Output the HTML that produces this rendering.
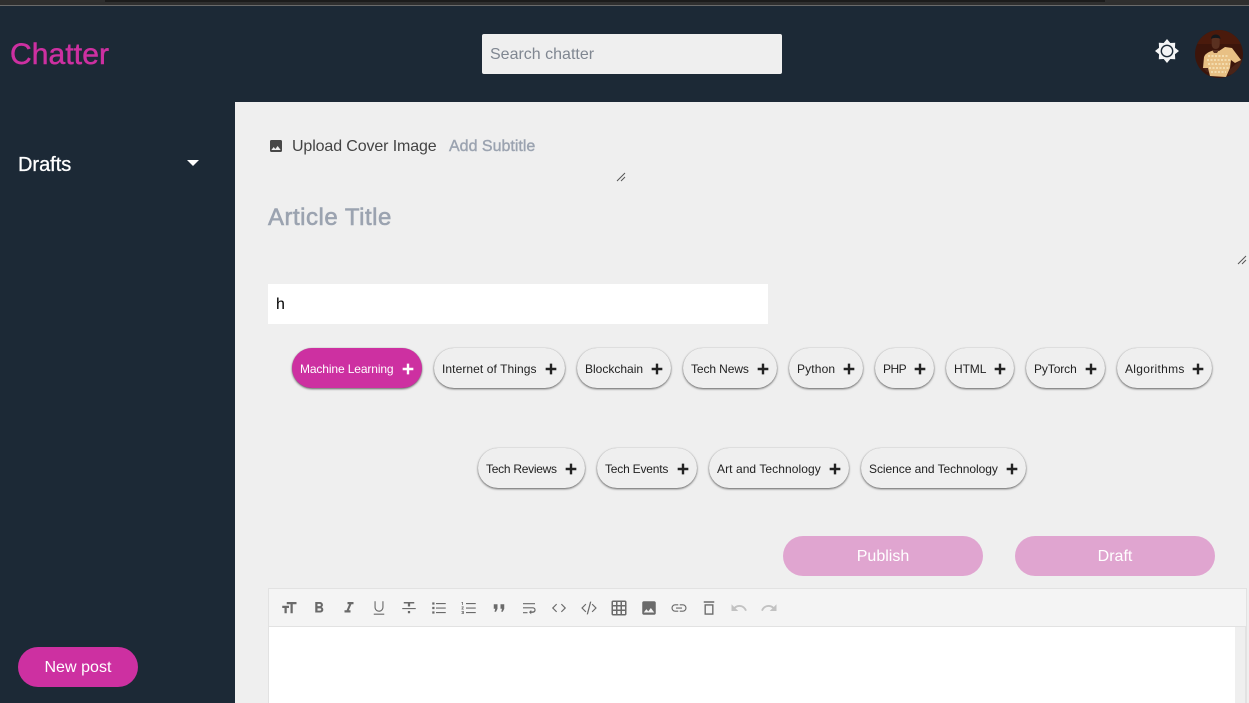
<!DOCTYPE html>
<html lang="en">
<head>
<meta charset="utf-8">
<title>Chatter</title>
<style>
html,body{margin:0;padding:0;width:1249px;height:703px;overflow:hidden;background:#efefef;font-family:"Liberation Sans",sans-serif}
*{box-sizing:border-box}
.a{position:absolute}
.t{position:absolute;white-space:nowrap}
.chip{position:absolute;height:40px;border-radius:20px;background:#efefef;box-shadow:0 1px 2px rgba(0,0,0,.6),0 0 .5px rgba(0,0,0,.3);color:#222;font-size:12px;line-height:43px;padding-left:8px;white-space:nowrap}
.chip svg{position:absolute;right:6px;top:13px;width:16px;height:16px;fill:#222}
.chip.on{background:#cd30a1;color:#fff}
.chip.on svg{fill:#fff}
.tool{position:absolute;top:599px;width:18px;height:18px;fill:#6a6a6a}
.tool.off{fill:#c2c2c2}
.btn{position:absolute;top:536px;width:200px;height:40px;border-radius:20px;background:#e0a5d0;color:#fff;text-align:center;font-size:16px;line-height:42px}
</style>
</head>
<body>
<div class="a" style="left:0;top:0;width:1249px;height:5px;background:#2f2f2f"></div>
<div class="a" style="left:105px;top:0;width:1000px;height:2px;background:#1c1c1c"></div>
<div class="a" style="left:0;top:5px;width:1249px;height:1px;background:#6a6a6a"></div>
<div class="a" style="left:0;top:6px;width:1249px;height:96px;background:#1c2936"></div>
<div class="a" style="left:0;top:102px;width:235px;height:601px;background:#1c2936"></div>

<div class="t" style="left:10px;top:37px;font-size:30px;line-height:36px;color:#cd30a1;letter-spacing:.1px;-webkit-text-stroke:.5px #cd30a1">Chatter</div>
<div class="a" style="left:482px;top:34px;width:300px;height:40px;background:#efefef;border-radius:2px"></div>
<div class="t" style="left:490px;top:35px;font-size:16px;line-height:40px;color:#808791">Search chatter</div>
<svg class="a" style="left:1155px;top:39px" width="24" height="24" viewBox="0 0 24 24" fill="#f4f5f6" fill-rule="evenodd"><path d="M12 0L15.300 4.050 20.200 3.800 19.950 8.700 24 12 19.950 15.300 20.200 20.200 15.300 19.950 12 24 8.700 19.950 3.800 20.200 4.050 15.300 0 12 4.050 8.700 3.800 3.800 8.700 4.050zM12 5.600a6.400 6.400 0 1 0 0 12.800a6.400 6.400 0 1 0 0-12.800zM12 7a5 5 0 1 1 0 10a5 5 0 1 1 0-10z"/></svg>
<svg class="a" style="left:1195px;top:30px" width="48" height="48" viewBox="0 0 48 48">
<defs><clipPath id="c"><circle cx="24" cy="24" r="24"/></clipPath></defs>
<g clip-path="url(#c)">
<rect width="48" height="48" fill="#3c150b"/>
<path d="M0 0h48v14H0z" fill="#4a1a0c"/>
<path d="M7 37l5 5 6 2-3-6zM46 29l2 5-8 10-7 1 2-6 6-5z" fill="#4a2418"/>
<path d="M8 38L9 27Q10 24 14 22L19 20 24 21 30 17 37 18 46 30 40 33 36 30 35 38 31 47 15 46 13 38z" fill="#e8c084"/>
<path d="M13 26h20M12 30h23M13 34h22M14 38h20M16 42h15" stroke="#f3dcae" stroke-width="2" stroke-dasharray="2 1.500"/>
<path d="M17 20h7l-2 3h-3z" fill="#5a3020"/>
<path d="M16.700 9c0-4 8-4 8 0v5c0 3-1.500 5-4 5s-4-2-4-5z" fill="#5a3020"/>
<path d="M16 9c0-6 9.500-6 9.500 0-2.500-1.500-7-1.500-9.500 0z" fill="#14181c"/>
</g>
</svg>

<div class="t" style="left:18px;top:153px;font-size:20px;line-height:25px;color:#fff;letter-spacing:-.02px;-webkit-text-stroke:.3px #fff">Drafts</div>
<div class="a" style="left:187px;top:160px;width:0;height:0;border-left:6.500px solid transparent;border-right:6.500px solid transparent;border-top:6px solid #fff"></div>
<div class="a" style="left:18px;top:647px;width:120px;height:40px;border-radius:20px;background:#cd30a1;color:#fff;font-size:16px;line-height:42px;text-align:center;letter-spacing:.05px">New post</div>

<svg class="a" style="left:268px;top:138px" width="16" height="16" viewBox="0 0 24 24" fill="#484848"><path d="M21 19V5c0-1.100-.9-2-2-2H5c-1.100 0-2 .9-2 2v14c0 1.100.9 2 2 2h14c1.100 0 2-.9 2-2zM8.500 13.500l2.500 3.010L14.500 12l4.500 6H5l3.500-4.500z"/></svg>
<div class="t" style="left:292px;top:137px;font-size:16px;line-height:20px;color:#444;letter-spacing:-.12px">Upload Cover Image</div>
<div class="t" style="left:449px;top:137px;font-size:16px;line-height:20px;color:#9ba3b0;letter-spacing:0;-webkit-text-stroke:.4px #9ba3b0">Add Subtitle</div>
<svg class="a" style="left:616px;top:172px" width="10" height="10"><path d="M1 9L9 1M5 9L9 5" stroke="#555" fill="none"/></svg>
<div class="t" style="left:268px;top:203px;font-size:24px;line-height:30px;color:#9ba3b0;-webkit-text-stroke:.6px #9ba3b0;letter-spacing:.5px">Article Title</div>
<svg class="a" style="left:1237px;top:255px" width="10" height="10"><path d="M1 9L9 1M5 9L9 5" stroke="#555" fill="none"/></svg>

<div class="a" style="left:268px;top:284px;width:500px;height:40px;background:#fff"></div>
<div class="t" style="left:276px;top:285px;font-size:16px;line-height:40px;color:#000">h</div>

<div class="chip on" style="left:292px;top:348px;width:130px;letter-spacing:-.12px">Machine Learning<svg viewBox="0 0 24 24"><path d="M20 13.800h-6.200v6.200h-3.600v-6.200H4v-3.600h6.200V4h3.600v6.200H20z"/></svg></div>
<div class="chip" style="left:434px;top:348px;width:131px;letter-spacing:.08px">Internet of Things<svg viewBox="0 0 24 24"><path d="M20 13.800h-6.200v6.200h-3.600v-6.200H4v-3.600h6.200V4h3.600v6.200H20z"/></svg></div>
<div class="chip" style="left:577px;top:348px;width:94px;letter-spacing:0">Blockchain<svg viewBox="0 0 24 24"><path d="M20 13.800h-6.200v6.200h-3.600v-6.200H4v-3.600h6.200V4h3.600v6.200H20z"/></svg></div>
<div class="chip" style="left:683px;top:348px;width:94px;letter-spacing:-.1px">Tech News<svg viewBox="0 0 24 24"><path d="M20 13.800h-6.200v6.200h-3.600v-6.200H4v-3.600h6.200V4h3.600v6.200H20z"/></svg></div>
<div class="chip" style="left:789px;top:348px;width:74px;letter-spacing:.15px">Python<svg viewBox="0 0 24 24"><path d="M20 13.800h-6.200v6.200h-3.600v-6.200H4v-3.600h6.200V4h3.600v6.200H20z"/></svg></div>
<div class="chip" style="left:875px;top:348px;width:59px;letter-spacing:-.5px">PHP<svg viewBox="0 0 24 24"><path d="M20 13.800h-6.200v6.200h-3.600v-6.200H4v-3.600h6.200V4h3.600v6.200H20z"/></svg></div>
<div class="chip" style="left:946px;top:348px;width:68px;letter-spacing:-.1px">HTML<svg viewBox="0 0 24 24"><path d="M20 13.800h-6.200v6.200h-3.600v-6.200H4v-3.600h6.200V4h3.600v6.200H20z"/></svg></div>
<div class="chip" style="left:1026px;top:348px;width:79px;letter-spacing:-.1px">PyTorch<svg viewBox="0 0 24 24"><path d="M20 13.800h-6.200v6.200h-3.600v-6.200H4v-3.600h6.200V4h3.600v6.200H20z"/></svg></div>
<div class="chip" style="left:1117px;top:348px;width:95px;letter-spacing:.3px">Algorithms<svg viewBox="0 0 24 24"><path d="M20 13.800h-6.200v6.200h-3.600v-6.200H4v-3.600h6.200V4h3.600v6.200H20z"/></svg></div>
<div class="chip" style="left:478px;top:448px;width:107px;letter-spacing:-.27px">Tech Reviews<svg viewBox="0 0 24 24"><path d="M20 13.800h-6.200v6.200h-3.600v-6.200H4v-3.600h6.200V4h3.600v6.200H20z"/></svg></div>
<div class="chip" style="left:597px;top:448px;width:100px;letter-spacing:-.2px">Tech Events<svg viewBox="0 0 24 24"><path d="M20 13.800h-6.200v6.200h-3.600v-6.200H4v-3.600h6.200V4h3.600v6.200H20z"/></svg></div>
<div class="chip" style="left:709px;top:448px;width:140px;letter-spacing:.07px">Art and Technology<svg viewBox="0 0 24 24"><path d="M20 13.800h-6.200v6.200h-3.600v-6.200H4v-3.600h6.200V4h3.600v6.200H20z"/></svg></div>
<div class="chip" style="left:861px;top:448px;width:165px;letter-spacing:-.05px">Science and Technology<svg viewBox="0 0 24 24"><path d="M20 13.800h-6.200v6.200h-3.600v-6.200H4v-3.600h6.200V4h3.600v6.200H20z"/></svg></div>

<div class="btn" style="left:783px">Publish</div>
<div class="btn" style="left:1015px">Draft</div>

<div class="a" style="left:268px;top:588px;width:979px;height:39px;background:#f4f4f4;border:1px solid #e2e2e2"></div>
<div class="a" style="left:268px;top:627px;width:967px;height:76px;background:#fff;border-left:1px solid #e2e2e2"></div>
<div class="a" style="left:1235px;top:627px;width:10px;height:76px;background:#efefef"></div>
<div class="a" style="left:1245px;top:627px;width:2px;height:76px;background:#e2e2e2"></div>

<svg class="tool" style="left:280px" viewBox="0 0 24 24"><path d="M9 4v3h5v12h3V7h5V4H9zm-6 8h3v7h3v-7h3V9H3v3z"/></svg>
<svg class="tool" style="left:310px" viewBox="0 0 24 24"><path d="M15.600 10.790c.97-.67 1.650-1.770 1.650-2.790 0-2.260-1.750-4-4-4H7v14h7.040c2.090 0 3.710-1.700 3.710-3.790 0-1.520-.86-2.820-2.150-3.420zM10 6.500h3c.83 0 1.500.67 1.500 1.500s-.67 1.500-1.500 1.500h-3v-3zm3.500 9H10v-3h3.500c.83 0 1.500.67 1.500 1.500s-.67 1.500-1.500 1.500z"/></svg>
<svg class="tool" style="left:340px" viewBox="0 0 24 24"><path d="M10 4v3h2.210l-3.420 8H6v3h8v-3h-2.210l3.420-8H18V4z"/></svg>
<svg class="tool" style="left:370px" viewBox="0 0 24 24"><path d="M12 17c3.310 0 6-2.690 6-6V3h-1.500v8c0 2.500-2 4.500-4.500 4.500S7.500 13.500 7.500 11V3H6v8c0 3.310 2.690 6 6 6zm-7 2.500V21h14v-1.500H5z"/></svg>
<svg class="tool" style="left:400px" viewBox="0 0 24 24"><path d="M10.500 19h3v-3h-3v3zM5 4v2h5.500v4h3V6H19V4H5zM3 13.500h18V12H3v1.500z"/></svg>
<svg class="tool" style="left:430px" viewBox="0 0 24 24"><path d="M3 10.500h3v3H3zM3 4.500h3v3H3zM3 16.500h3v3H3zM8 18.750h13v-1.500H8zM8 12.750h13v-1.500H8zM8 5.250v1.500h13v-1.500z"/></svg>
<svg class="tool" style="left:460px" viewBox="0 0 24 24"><path d="M2 17h2v.5H3v1h1v.5H2v1h3v-4H2v1zm1-9h1V4H2v1h1v3zm-1 3h1.800L2 13.100v.9h3v-1H3.200L5 10.900V10H2v1zm6-5.750v1.500h13v-1.500zM8 18.750h13v-1.500H8zM8 12.750h13v-1.500H8z"/></svg>
<svg class="tool" style="left:490px" viewBox="0 0 24 24"><path d="M6 7h4v6l-2 4H6l1-4H5V7h1zm9 0h4v6l-2 4h-2l1-4h-2V7h1z"/></svg>
<svg class="tool" style="left:520px" viewBox="0 0 24 24"><path d="M4 19h6v-1.500H4v1.500zM20 5.500H4V7h16V5.500zM4 11v1.500h13.250c1.100 0 2 .9 2 2s-.9 2-2 2H15v-2l-3 3 3 3v-2h2c2.210 0 3.800-1.600 3.800-3.800S19.210 11 17 11z"/></svg>
<svg class="tool" style="left:550px" viewBox="0 0 24 24"><path d="M9.400 16.600L4.800 12l4.600-4.600L8.300 6.300 2.600 12l5.700 5.700zm5.200 0l4.600-4.600-4.600-4.600 1.100-1.100 5.700 5.700-5.700 5.700z"/></svg>
<svg class="tool" style="left:580px" viewBox="0 0 24 24"><path d="M8.400 16.600L3.800 12l4.600-4.600-1.100-1.100L1.600 12l5.700 5.700zm7.200 0l4.600-4.600-4.600-4.600 1.100-1.100 5.700 5.700-5.700 5.700zM13.400 3.500h1.700L10.600 20.500H8.900z"/></svg>
<svg class="tool" style="left:610px" viewBox="0 0 24 24"><path d="M20 2H4c-1.100 0-2 .9-2 2v16c0 1.100.9 2 2 2h16c1.100 0 2-.9 2-2V4c0-1.100-.9-2-2-2zM8 20H4v-4h4v4zm0-6H4v-4h4v4zm0-6H4V4h4v4zm6 12h-4v-4h4v4zm0-6h-4v-4h4v4zm0-6h-4V4h4v4zm6 12h-4v-4h4v4zm0-6h-4v-4h4v4zm0-6h-4V4h4v4z"/></svg>
<svg class="tool" style="left:640px" viewBox="0 0 24 24"><path d="M21 19V5c0-1.100-.9-2-2-2H5c-1.100 0-2 .9-2 2v14c0 1.100.9 2 2 2h14c1.100 0 2-.9 2-2zM8.500 13.500l2.500 3.010L14.500 12l4.500 6H5l3.500-4.500z"/></svg>
<svg class="tool" style="left:670px" viewBox="0 0 24 24"><path d="M3.500 12c0-1.900 1.600-3.500 3.500-3.500h4V7H7c-2.760 0-5 2.240-5 5s2.240 5 5 5h4v-1.500H7c-1.900 0-3.500-1.600-3.500-3.500zM8 12.750h8v-1.500H8zM17 7h-4v1.500h4c1.900 0 3.500 1.600 3.500 3.500s-1.600 3.500-3.500 3.500h-4V17h4c2.760 0 5-2.240 5-5s-2.240-5-5-5z"/></svg>
<svg class="tool" style="left:700px" viewBox="0 0 24 24" fill-rule="evenodd"><path d="M5 3h14v2H5zM6 7h12v14H6zM7.800 8.800v10.400h8.400V8.800z"/></svg>
<svg class="tool off" style="left:730px" viewBox="0 0 24 24"><path d="M12.500 8c-2.650 0-5.050.99-6.900 2.600L2 7v9h9l-3.620-3.620c1.390-1.160 3.160-1.880 5.120-1.880 3.540 0 6.550 2.310 7.600 5.500l2.370-.78C21.080 11.030 17.150 8 12.500 8z"/></svg>
<svg class="tool off" style="left:760px" viewBox="0 0 24 24"><path d="M18.400 10.600C16.550 8.990 14.150 8 11.500 8c-4.650 0-8.580 3.030-9.960 7.220L3.900 16c1.050-3.190 4.050-5.500 7.600-5.500 1.950 0 3.730.72 5.120 1.880L13 16h9V7l-3.600 3.600z"/></svg>
</body>
</html>
